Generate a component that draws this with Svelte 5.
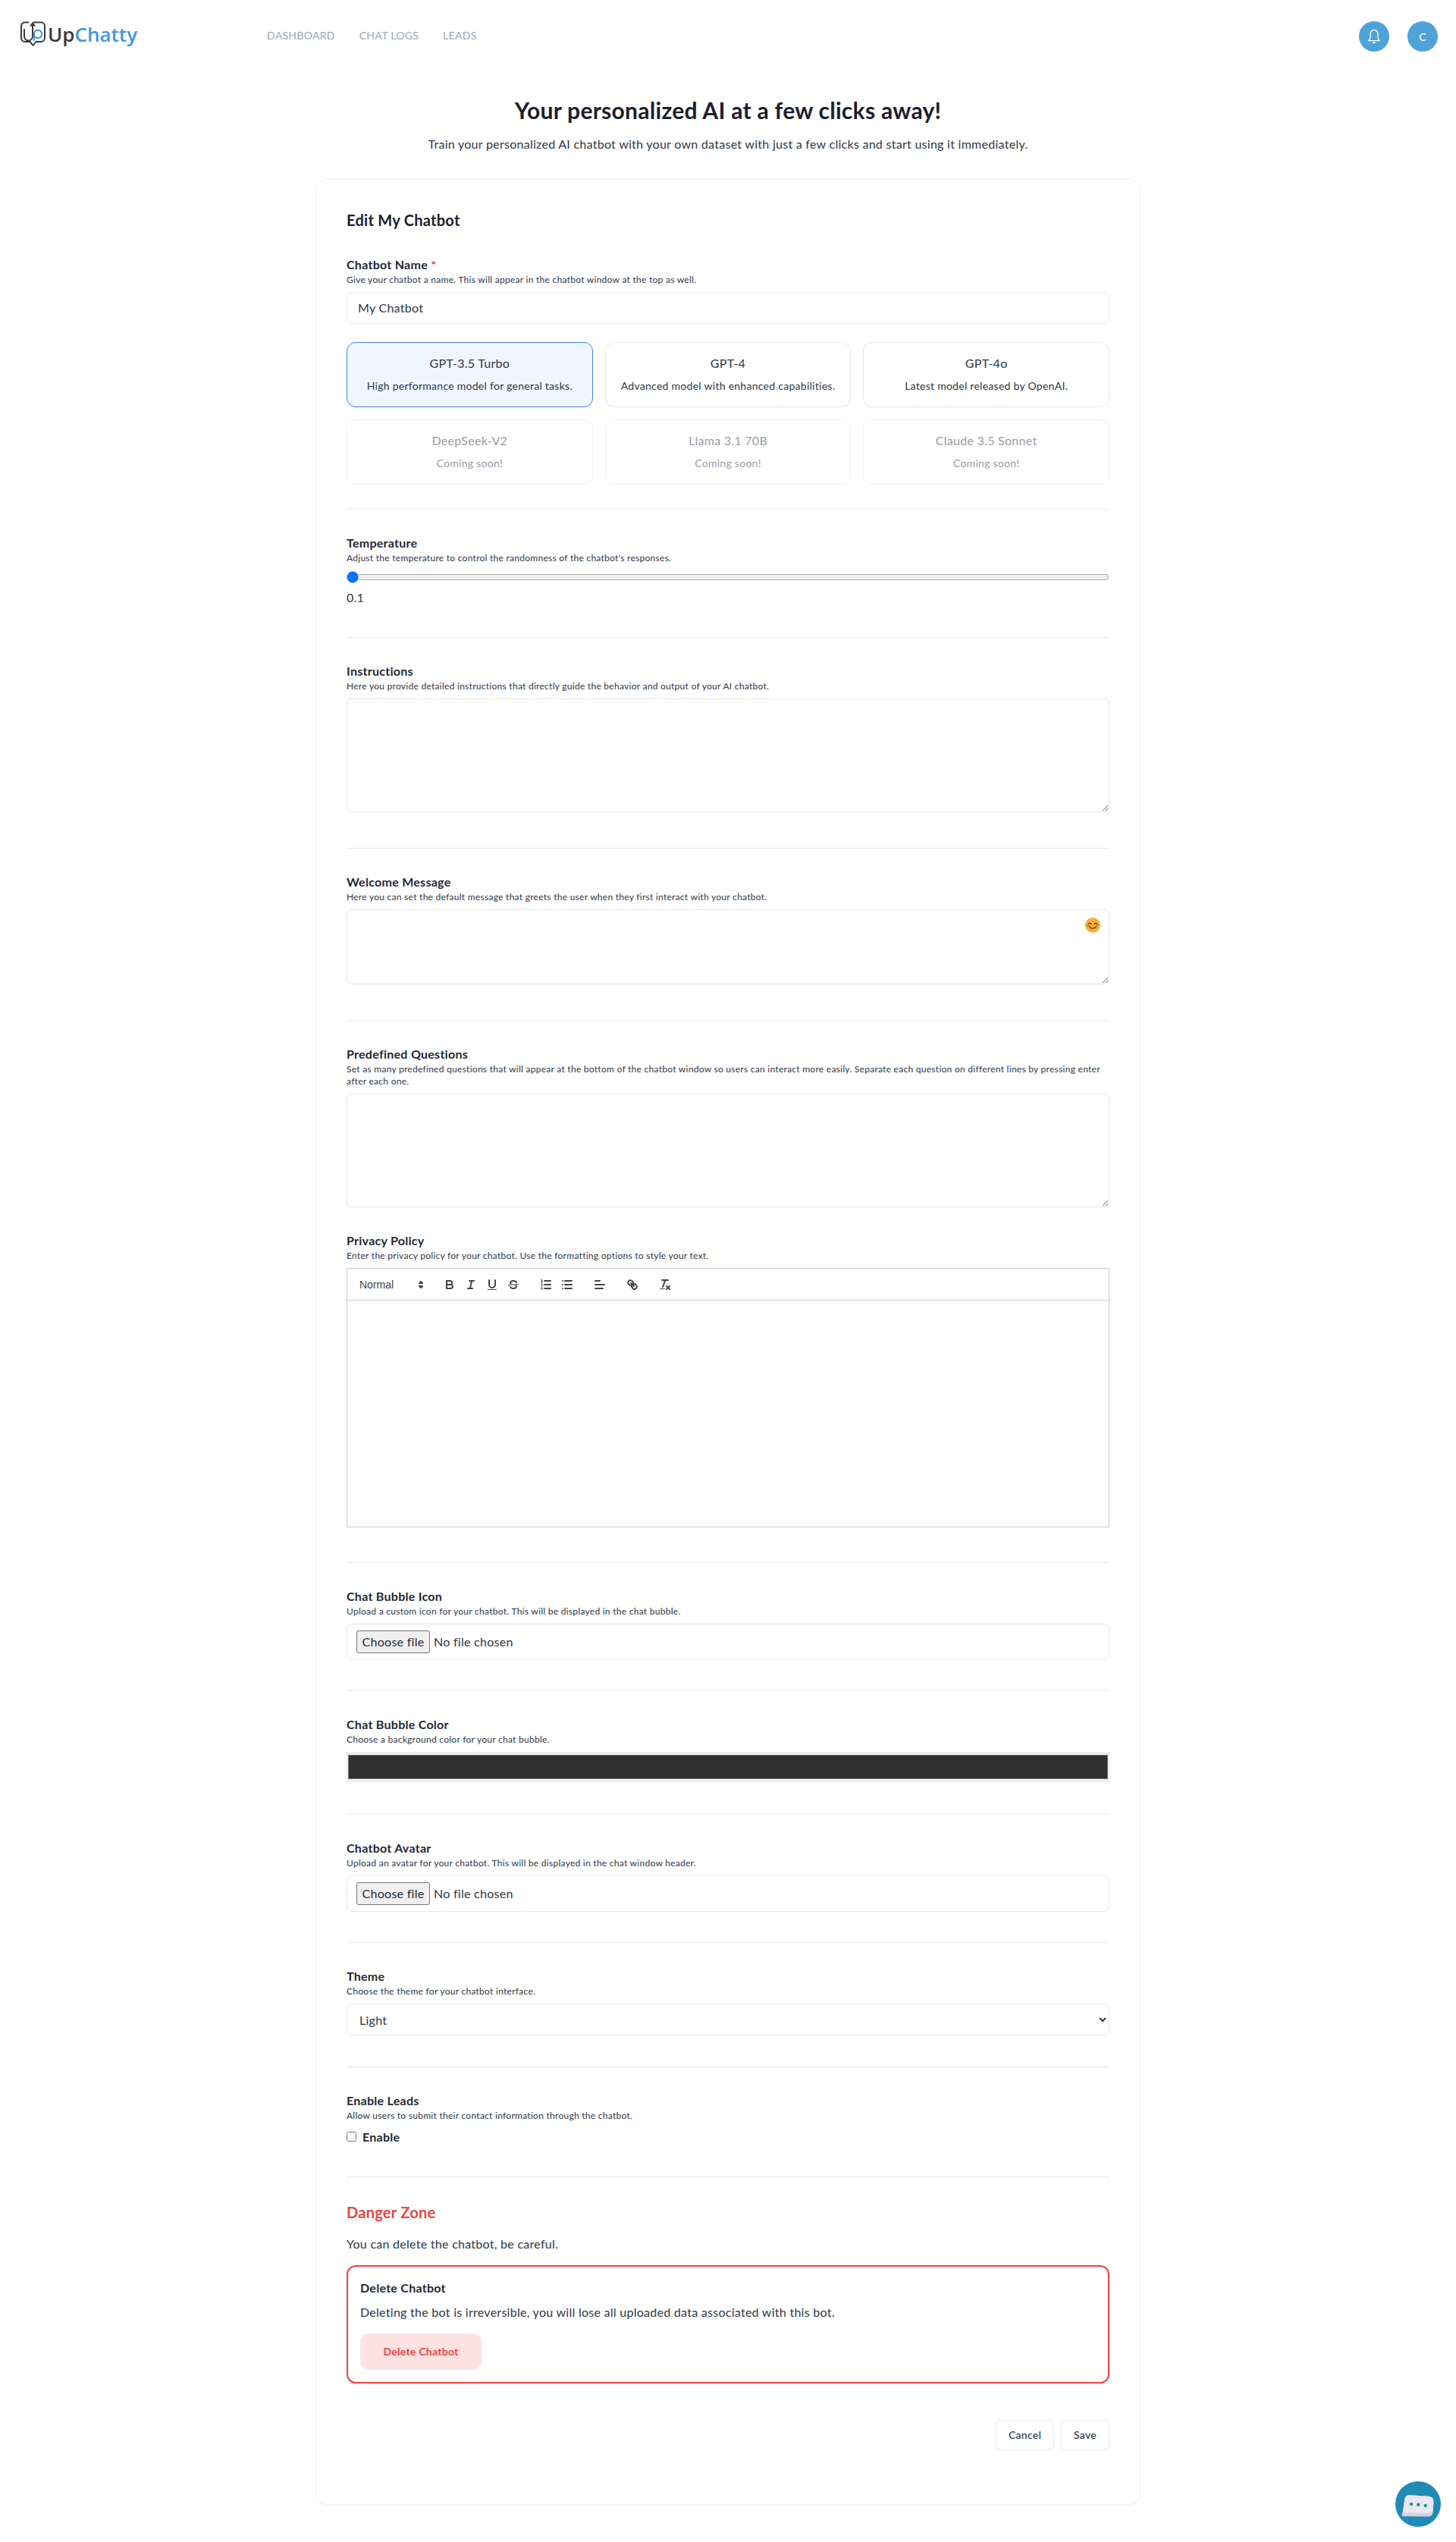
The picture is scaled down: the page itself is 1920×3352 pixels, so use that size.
<script>
  const links = ['Dashboard', 'Chat Logs', 'Leads'];
  const models = [
    { name: 'GPT-3.5 Turbo', desc: 'High performance model for general tasks.', selected: true },
    { name: 'GPT-4', desc: 'Advanced model with enhanced capabilities.' },
    { name: 'GPT-4o', desc: 'Latest model released by OpenAI.' },
    { name: 'DeepSeek-V2', desc: 'Coming soon!', disabled: true },
    { name: 'Llama 3.1 70B', desc: 'Coming soon!', disabled: true },
    { name: 'Claude 3.5 Sonnet', desc: 'Coming soon!', disabled: true }
  ];
  let name = $state('My Chatbot');
  let temperature = $state(0.1);
  let model = $state('GPT-3.5 Turbo');
</script>

<nav class="nav">
  <a class="logo" href="#top">
    <svg class="logo-mark" width="33" height="34" viewBox="0 0 33 34" fill="none" stroke-linecap="round" stroke-linejoin="round">
      <path d="M10.500 1.500H6a5 5 0 0 0-5 5v15.500a5 5 0 0 0 5 5h6.500l4 5 4-5H27a5 5 0 0 0 5-5V6.500a5 5 0 0 0-5-5H17" stroke="#3a3a3a" stroke-width="2"/>
      <path d="M5 11v9a5.500 5.500 0 0 0 11 0V3M13.500 6l2.500-3.500L18.500 6" stroke="#3a3a3a" stroke-width="2"/>
      <circle cx="23" cy="17" r="5.200" stroke="#3f97e0" stroke-width="2"/>
      <path d="M17.800 17v8" stroke="#3f97e0" stroke-width="2"/>
    </svg>
    <span class="logo-text">Up<span class="logo-blue">Chatty</span></span>
  </a>
  <div class="nav-links">
    {#each links as link}
      <a href="#top">{link}</a>
    {/each}
  </div>
  <div class="nav-right">
    <button class="round" aria-label="Notifications">
      <svg width="18" height="20" viewBox="0 0 18 20" fill="none" stroke="#fff" stroke-width="1.300" stroke-linejoin="round">
        <path d="M9 1.500a5 5 0 0 0-5 5v4.500c0 2-.8 3.400-2.200 4.700h14.400C14.800 14.400 14 13 14 11V6.500a5 5 0 0 0-5-5z"/>
        <path d="M7.800 18.300h2.400" stroke-width="1.500" stroke-linecap="round"/>
      </svg>
    </button>
    <button class="round">C</button>
  </div>
</nav>

<header class="hero">
  <h1>Your personalized AI at a few clicks away!</h1>
  <p>Train your personalized AI chatbot with your own dataset with just a few clicks and start using it immediately.</p>
</header>

<main class="card">
  <h2>Edit My Chatbot</h2>

  <section class="first">
    <label class="label" for="bot-name">Chatbot Name <span class="req">*</span></label>
    <p class="hint">Give your chatbot a name. This will appear in the chatbot window at the top as well.</p>
    <input id="bot-name" class="field" type="text" bind:value={name} />
    <div class="models">
      {#each models as m}
        <button class="model" class:selected={model === m.name} class:disabled={m.disabled} onclick={() => { if (!m.disabled) model = m.name; }}>
          <span class="model-name">{m.name}</span>
          <span class="model-desc">{m.desc}</span>
        </button>
      {/each}
    </div>
  </section>

  <hr class="gap-32" />

  <section>
    <label class="label" for="temp">Temperature</label>
    <p class="hint">Adjust the temperature to control the randomness of the chatbot's responses.</p>
    <input id="temp" class="range" type="range" min="0.1" max="1" step="0.1" bind:value={temperature} />
    <div class="range-value">{temperature}</div>
  </section>

  <hr class="gap-40" />

  <section>
    <label class="label" for="instructions">Instructions</label>
    <p class="hint">Here you provide detailed instructions that directly guide the behavior and output of your AI chatbot.</p>
    <textarea id="instructions" class="field area"></textarea>
  </section>

  <hr class="gap-47" />

  <section>
    <label class="label" for="welcome">Welcome Message</label>
    <p class="hint">Here you can set the default message that greets the user when they first interact with your chatbot.</p>
    <div class="area-wrap">
      <textarea id="welcome" class="field area short"></textarea>
      <svg class="emoji" width="20" height="20" viewBox="0 0 20 20" fill="none">
        <circle cx="10" cy="10" r="10" fill="#fbae35"/>
        <ellipse cx="3.600" cy="10" rx="2" ry="1.300" fill="#f5793b"/>
        <ellipse cx="16.400" cy="10" rx="2" ry="1.300" fill="#f5793b"/>
        <path d="M4.500 8.500a2 2 0 0 1 3.500 0M12 8.500a2 2 0 0 1 3.500 0M5.500 11.500c1 3.500 8 3.500 9 0" stroke="#4a3320" stroke-width="1.200" stroke-linecap="round"/>
      </svg>
    </div>
  </section>

  <hr class="gap-47" />

  <section>
    <label class="label" for="questions">Predefined Questions</label>
    <p class="hint">Set as many predefined questions that will appear at the bottom of the chatbot window so users can interact more easily. Separate each question on different lines by pressing enter after each one.</p>
    <textarea id="questions" class="field area"></textarea>
  </section>

  <section class="privacy">
    <div class="label">Privacy Policy</div>
    <p class="hint">Enter the privacy policy for your chatbot. Use the formatting options to style your text.</p>
    <div class="editor">
      <div class="toolbar">
        <span class="picker">
          Normal
          <svg width="18" height="18" viewBox="0 0 18 18"><polygon class="st" points="7 11 9 13 11 11 7 11"/><polygon class="st" points="7 7 9 5 11 7 7 7"/></svg>
        </span>
        <span class="tool-group">
          <button class="tool" aria-label="Bold"><svg viewBox="0 0 18 18"><path class="st" d="M5,4H9.500A2.500,2.500,0,0,1,12,6.500v0A2.500,2.500,0,0,1,9.500,9H5A0,0,0,0,1,5,9V4A0,0,0,0,1,5,4Z"/><path class="st" d="M5,9h5.500A2.500,2.500,0,0,1,13,11.500v0A2.500,2.500,0,0,1,10.500,14H5a0,0,0,0,1,0,0V9A0,0,0,0,1,5,9Z"/></svg></button>
          <button class="tool" aria-label="Italic"><svg viewBox="0 0 18 18"><line class="st" x1="7" x2="13" y1="4" y2="4"/><line class="st" x1="5" x2="11" y1="14" y2="14"/><line class="st" x1="8" x2="10" y1="14" y2="4"/></svg></button>
          <button class="tool" aria-label="Underline"><svg viewBox="0 0 18 18"><path class="st" d="M5,3V9a4.012,4.012,0,0,0,4,4H9a4.012,4.012,0,0,0,4-4V3"/><rect class="fl" height="1" rx="0.500" ry="0.500" width="12" x="3" y="15"/></svg></button>
          <button class="tool" aria-label="Strike"><svg viewBox="0 0 18 18"><line class="st thin" x1="15.500" x2="2.500" y1="8.500" y2="9.500"/><path class="fl" d="M9.007,8C6.542,7.791,6,7.519,6,6.500,6,5.792,7.283,5,9,5c1.571,0,2.765.679,2.969,1.309a1,1,0,0,0,1.900-.617C13.356,4.106,11.354,3,9,3,6.200,3,4,4.538,4,6.500a3.200,3.200,0,0,0,.5,1.843Z"/><path class="fl" d="M8.984,10C11.457,10.208,12,10.479,12,11.500c0,.708-1.283,1.500-3,1.500-1.571,0-2.765-.679-2.969-1.309a1,1,0,1,0-1.900.617C4.644,13.894,6.646,15,9,15c2.800,0,5-1.538,5-3.500a3.200,3.200,0,0,0-.5-1.843Z"/></svg></button>
        </span>
        <span class="tool-group">
          <button class="tool" aria-label="Ordered list"><svg viewBox="0 0 18 18"><line class="st" x1="7" x2="15" y1="4" y2="4"/><line class="st" x1="7" x2="15" y1="9" y2="9"/><line class="st" x1="7" x2="15" y1="14" y2="14"/><line class="st thin" x1="2.500" x2="4.500" y1="5.500" y2="5.500"/><path class="fl" d="M3.500,6A0.500,0.500,0,0,1,3,5.500V3.085l-0.276.138A0.500,0.500,0,0,1,2.053,3c-0.124-.247-0.023-0.324.224-0.447l1-.5A0.500,0.500,0,0,1,4,2.500v3A0.500,0.500,0,0,1,3.500,6Z"/><path class="st thin" d="M4.500,10.500h-2c0-.234,1.850-1.076,1.850-2.234A0.959,0.959,0,0,0,2.500,8.156"/><path class="st thin" d="M2.500,14.846a0.959,0.959,0,0,0,1.850-.109A0.700,0.700,0,0,0,3.750,14a0.688,0.688,0,0,0,.6-0.736,0.959,0.959,0,0,0-1.850-.109"/></svg></button>
          <button class="tool" aria-label="Bullet list"><svg viewBox="0 0 18 18"><line class="st" x1="6" x2="15" y1="4" y2="4"/><line class="st" x1="6" x2="15" y1="9" y2="9"/><line class="st" x1="6" x2="15" y1="14" y2="14"/><line class="st" x1="3" x2="3" y1="4" y2="4"/><line class="st" x1="3" x2="3" y1="9" y2="9"/><line class="st" x1="3" x2="3" y1="14" y2="14"/></svg></button>
        </span>
        <span class="tool-group">
          <button class="tool" aria-label="Align"><svg viewBox="0 0 18 18"><line class="st" x1="3" x2="15" y1="9" y2="9"/><line class="st" x1="3" x2="13" y1="14" y2="14"/><line class="st" x1="3" x2="9" y1="4" y2="4"/></svg></button>
        </span>
        <span class="tool-group">
          <button class="tool" aria-label="Link"><svg viewBox="0 0 18 18"><line class="st" x1="7" x2="11" y1="7" y2="11"/><path class="st" d="M8.900,4.577a3.476,3.476,0,0,1,.36,4.679A3.476,3.476,0,0,1,4.577,8.900C3.185,7.500,2.035,6.400,4.217,4.217S7.500,3.185,8.900,4.577Z"/><path class="st" d="M13.423,9.100a3.476,3.476,0,0,0-4.679-.36,3.476,3.476,0,0,0,.36,4.679c1.392,1.392,2.500,2.542,4.679.36S14.815,10.500,13.423,9.100Z"/></svg></button>
        </span>
        <span class="tool-group">
          <button class="tool" aria-label="Clear format"><svg viewBox="0 0 18 18"><line class="st" x1="5" x2="13" y1="3" y2="3"/><line class="st" x1="6" x2="9.350" y1="12" y2="3"/><line class="st" x1="11" x2="15" y1="11" y2="15"/><line class="st" x1="15" x2="11" y1="11" y2="15"/><rect class="fl" height="1" rx="0.500" ry="0.500" width="7" x="2" y="14"/></svg></button>
        </span>
      </div>
      <div class="editor-body"></div>
    </div>
  </section>

  <hr class="gap-46" />

  <section>
    <div class="label">Chat Bubble Icon</div>
    <p class="hint">Upload a custom icon for your chatbot. This will be displayed in the chat bubble.</p>
    <label class="field file">
      <input type="file" hidden />
      <span class="file-btn">Choose file</span>
      <span>No file chosen</span>
    </label>
  </section>

  <hr class="gap-40" />

  <section>
    <label class="label" for="bubble-color">Chat Bubble Color</label>
    <p class="hint">Choose a background color for your chat bubble.</p>
    <input id="bubble-color" class="color" type="color" value="#2f2f2f" />
  </section>

  <hr class="gap-42" />

  <section>
    <div class="label">Chatbot Avatar</div>
    <p class="hint">Upload an avatar for your chatbot. This will be displayed in the chat window header.</p>
    <label class="field file">
      <input type="file" hidden />
      <span class="file-btn">Choose file</span>
      <span>No file chosen</span>
    </label>
  </section>

  <hr class="gap-40" />

  <section>
    <label class="label" for="theme">Theme</label>
    <p class="hint">Choose the theme for your chatbot interface.</p>
    <select id="theme" class="field select">
      <option>Light</option>
      <option>Dark</option>
    </select>
  </section>

  <hr class="gap-41" />

  <section>
    <div class="label">Enable Leads</div>
    <p class="hint">Allow users to submit their contact information through the chatbot.</p>
    <label class="check"><input type="checkbox" /> Enable</label>
  </section>

  <hr class="gap-40" />

  <section>
    <h3 class="danger-title">Danger Zone</h3>
    <p class="danger-text">You can delete the chatbot, be careful.</p>
    <div class="danger-box">
      <h4>Delete Chatbot</h4>
      <p>Deleting the bot is irreversible, you will lose all uploaded data associated with this bot.</p>
      <button class="danger-btn">Delete Chatbot</button>
    </div>
  </section>

  <div class="actions">
    <button class="btn">Cancel</button>
    <button class="btn">Save</button>
  </div>
</main>

<button class="chat-bubble" aria-label="Open chat">
  <svg width="60" height="60" viewBox="0 0 60 60">
    <path d="M8.500 46 12.500 23q1-5 6-4.700l25.500 1.500q6.500.5 6.300 7l-.5 13q-.3 6.700-6.800 6.700z" fill="#d8d2e1"/>
    <path d="M10 41 12.500 23q1-5 6-4.700l25.500 1.500q6.500.5 6.300 7l-.3 8q-.5 7-7 7z" fill="#ebe6f1"/>
    <circle cx="21" cy="30" r="2.200" fill="#10a07c"/>
    <circle cx="30.300" cy="30.700" r="2.200" fill="#10a07c"/>
    <circle cx="39.700" cy="32" r="2.200" fill="#10a07c"/>
  </svg>
</button>

<style>
  :global(body) { margin: 0; background: #fff; color: #1f2937; font-family: Lato, "Open Sans", sans-serif; font-size: 16px; line-height: 24px; letter-spacing: 0.017em; }
  button, input, textarea, select { letter-spacing: inherit; }

  .nav { display: flex; align-items: center; height: 96px; padding: 0 24px; box-sizing: border-box; }
  .logo { display: flex; align-items: center; gap: 3px; width: 328px; margin-top: -7px; text-decoration: none; padding-left: 3px; box-sizing: border-box; }
  .logo-mark { flex: none; }
  .logo-text { font-family: "Open Sans", sans-serif; font-size: 26px; font-weight: 600; line-height: 32px; letter-spacing: 0; color: #3a3a3a; }
  .logo-blue { color: #3f97e0; }
  .nav-links { display: flex; gap: 32px; margin-top: -2px; }
  .nav-links a { color: #a0aec0; font-size: 14px; font-weight: 500; line-height: 20px; text-transform: uppercase; text-decoration: none; }
  .nav-right { margin-left: auto; display: flex; gap: 24px; }
  .round { width: 40px; height: 40px; border: 0; padding: 0; border-radius: 50%; background: #4fa3d8; color: #fff; font: 500 14px Lato, sans-serif; display: flex; align-items: center; justify-content: center; }

  .hero { text-align: center; margin-top: 31px; }
  .hero h1 { margin: 0; font-size: 30px; line-height: 36px; font-weight: 700; color: #1a202c; }
  .hero p { margin: 15px 0 0; color: #2d3748; }

  .card { box-sizing: border-box; width: 1088px; margin: 34px auto 49px; padding: 40px 40px 71px; background: #fff; border: 1px solid #f3f4f6; border-radius: 16px; box-shadow: 0 1px 3px rgba(0, 0, 0, 0.05); }
  h2 { margin: 0 0 34px; font-size: 20px; line-height: 26px; font-weight: 700; color: #1a202c; }

  .label { display: block; font-weight: 700; color: #1f2937; }
  .req { color: #e53e3e; }
  .hint { margin: 0 0 8px; font-size: 12px; line-height: 16px; color: #2d3748; }

  .field { display: block; box-sizing: border-box; width: 100%; margin: 0; border: 1px solid #e5e7eb; border-radius: 6px; background: #fff; color: #2d3748; font: inherit; outline: none; }
  input[type='text'].field { height: 42px; padding: 0 14px 2px; }
  .area { height: 150px; padding: 8px 14px; resize: vertical; }
  .area.short { height: 99px; }
  .area-wrap { position: relative; }
  .emoji { position: absolute; top: 11px; right: 12px; }

  .models { display: grid; grid-template-columns: repeat(3, 1fr); gap: 16px; margin-top: 24px; }
  .model { height: 86px; padding: 0 8px 2px; display: flex; flex-direction: column; align-items: center; justify-content: center; gap: 8px; background: #fff; border: 1px solid #e5e7eb; border-radius: 12px; color: #2d3748; font-family: inherit; }
  .model.selected { background: #eff6ff; border-color: #3b82f6; }
  .model.disabled { opacity: 0.5; }
  .model-name { font-size: 16px; line-height: 24px; }
  .model-desc { font-size: 14px; line-height: 20px; }

  hr { margin: 0 0 32px; border: 0; border-top: 1px solid #e5e7eb; }
  .gap-32 { margin-top: 32px; }
  .gap-40 { margin-top: 40px; }
  .gap-41 { margin-top: 41px; }
  .gap-42 { margin-top: 42px; }
  .gap-46 { margin-top: 46px; }
  .gap-47 { margin-top: 47px; }

  .range { display: block; width: 100%; height: 16px; margin: 9px 0 0; }
  .range-value { margin-top: 7px; color: #2d3748; }

  .privacy { margin-top: 32px; }
  .editor { border: 1px solid #ccc; }
  .toolbar { display: flex; align-items: center; height: 41px; padding: 0 8px; border-bottom: 1px solid #ccc; }
  .picker { position: relative; display: flex; align-items: center; width: 98px; height: 24px; margin-right: 15px; padding-left: 8px; box-sizing: border-box; font: 500 14px "Liberation Sans", Arial, sans-serif; letter-spacing: 0; color: #444; }
  .picker svg { position: absolute; right: 0; top: 3px; }
  .tool-group { display: flex; margin-right: 15px; }
  .tool { width: 28px; height: 24px; padding: 3px 5px; border: 0; background: none; box-sizing: border-box; }
  .tool svg { display: block; width: 18px; height: 18px; }
  .st { fill: none; stroke: #444; stroke-width: 2; stroke-linecap: round; stroke-linejoin: round; }
  .st.thin { stroke-width: 1; }
  .fl { fill: #444; }
  .editor-body { height: 298px; }

  .file { display: flex; align-items: center; gap: 5px; height: 48px; padding: 0 12px; }
  .file-btn { box-sizing: border-box; display: flex; align-items: center; justify-content: center; width: 97px; height: 30px; padding-bottom: 1px; background: #efefef; border: 1px solid #767676; border-radius: 3px; color: #1f2937; }
  .color { display: block; width: 100%; height: 40px; margin: 0; padding: 4px 2px; border: 0; box-sizing: border-box; background: #efefef; }
  .color::-webkit-color-swatch-wrapper { padding: 0; }
  .color::-webkit-color-swatch { border: 1px solid #777; border-radius: 0; }
  .select { height: 42px; padding: 0 12px; }

  .check { display: flex; align-items: center; gap: 8px; margin-top: 7px; height: 24px; font-weight: 700; color: #1f2937; }
  .check input { width: 13px; height: 13px; margin: -2px 0 0; }

  .danger-title { margin: 0; font-size: 20px; line-height: 28px; font-weight: 700; color: #ef4444; }
  .danger-text { margin: 16px 0; color: #2d3748; }
  .danger-box { border: 2px solid #ef4444; border-radius: 12px; padding: 16px; }
  .danger-box h4 { margin: 0; font-size: 16px; line-height: 24px; font-weight: 700; color: #1f2937; }
  .danger-box p { margin: 8px 0 16px; color: #2d3748; }
  .danger-btn { width: 160px; height: 48px; padding: 0 0 1px; border: 0; border-radius: 12px; background: #fee2e2; color: #ef4444; font: 700 14px Lato, sans-serif; }

  .actions { display: flex; justify-content: flex-end; gap: 9px; margin-top: 48px; }
  .btn { height: 40px; padding: 0 16px 2px; background: #fff; border: 1px solid #e5e7eb; border-radius: 6px; color: #2d3748; font: 500 14px Lato, sans-serif; }

  .chat-bubble { position: fixed; right: 20px; bottom: 20px; width: 60px; height: 60px; padding: 0; border: 0; border-radius: 50%; background: #228bb5; }
  .chat-bubble svg { display: block; }
</style>
